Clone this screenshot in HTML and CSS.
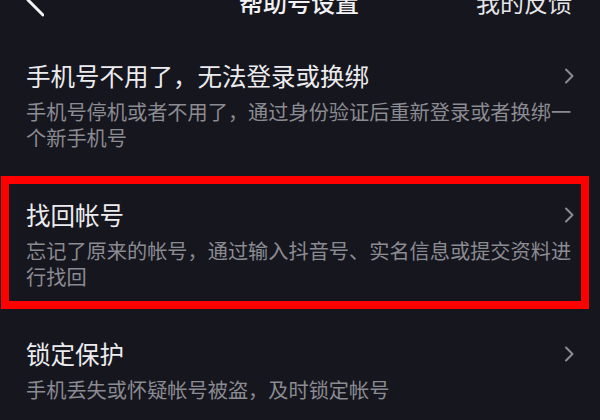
FILE: index.html
```html
<!DOCTYPE html>
<html lang="zh-CN">
<head>
<meta charset="utf-8">
<title>帮助号设置</title>
<link rel="stylesheet" href="styles.css">
</head>
<body>
<header class="topbar">
  <div class="back">
    <svg width="18" height="30" viewBox="0 0 18 30" aria-hidden="true">
      <path d="M17 -2 L2 13 L17 28" fill="none" stroke="#f2f2f4" stroke-width="3" stroke-linecap="round" stroke-linejoin="round"/>
    </svg>
  </div>
  <div class="topbar-title">帮助号设置</div>
  <div class="topbar-action">我的反馈</div>
</header>
<main class="list">
  <section class="item">
    <div class="item-head">
      <span class="item-title">手机号不用了，无法登录或换绑</span>
      <svg class="chev" width="10" height="16" viewBox="0 0 10 16" aria-hidden="true"><path d="M2 1.5 L8.5 8 L2 14.5" fill="none" stroke="#8c8c93" stroke-width="2" stroke-linecap="round" stroke-linejoin="round"/></svg>
    </div>
    <p class="item-desc">手机号停机或者不用了，通过身份验证后重新登录或者换绑一个新手机号</p>
  </section>
  <section class="item highlight">
    <div class="item-head">
      <span class="item-title">找回帐号</span>
      <svg class="chev" width="10" height="16" viewBox="0 0 10 16" aria-hidden="true"><path d="M2 1.5 L8.5 8 L2 14.5" fill="none" stroke="#8c8c93" stroke-width="2" stroke-linecap="round" stroke-linejoin="round"/></svg>
    </div>
    <p class="item-desc">忘记了原来的帐号，通过输入抖音号、实名信息或提交资料进行找回</p>
  </section>
  <section class="item">
    <div class="item-head">
      <span class="item-title">锁定保护</span>
      <svg class="chev" width="10" height="16" viewBox="0 0 10 16" aria-hidden="true"><path d="M2 1.5 L8.5 8 L2 14.5" fill="none" stroke="#8c8c93" stroke-width="2" stroke-linecap="round" stroke-linejoin="round"/></svg>
    </div>
    <p class="item-desc">手机丢失或怀疑帐号被盗，及时锁定帐号</p>
  </section>
</main>
</body>
</html>
```

FILE: styles.css
```css
html, body {
  margin: 0;
  padding: 0;
  background: #16161e;
}
body {
  font-family: "Noto Sans CJK SC", "Noto Sans", sans-serif;
  color: #ececef;
  overflow: hidden;
}
.topbar {
  display: grid;
  grid-template-columns: 1fr auto 1fr;
  align-items: start;
  height: 46px;
  margin-top: -13px;
  padding: 0 28px 0 26px;
  font-size: 24px;
  line-height: 30px;
}
.back {
  display: flex;
  height: 30px;
}
.topbar-title {
  font-weight: 500;
  color: #f2f2f4;
}
.topbar-action {
  justify-self: end;
  color: #e6e6ea;
}
.list {
  display: flex;
  flex-direction: column;
}
.item {
  position: relative;
  padding: 28px 26px 21px 26px;
}
.item-head {
  display: flex;
  justify-content: space-between;
  align-items: center;
  height: 30px;
}
.item-title {
  font-size: 24.5px;
  line-height: 30px;
  color: #ececef;
}
.chev {
  flex: none;
}
.item-desc {
  margin: 8px 0 0 0;
  font-size: 20.2px;
  line-height: 26px;
  color: #8b8b92;
}
.highlight::after {
  content: "";
  position: absolute;
  top: 4px;
  bottom: 2px;
  left: 1px;
  right: 11px;
  border: 8px solid #fe0000;
  pointer-events: none;
}
```
